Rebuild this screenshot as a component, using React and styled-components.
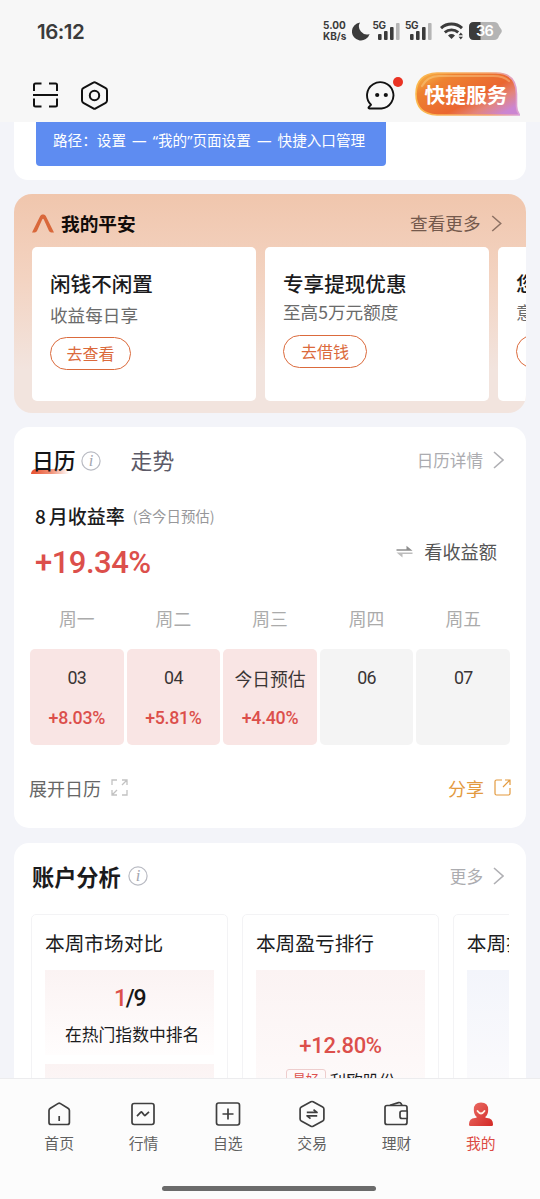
import React from 'react'
import styled, { createGlobalStyle, css } from 'styled-components'

const colors = {
  page: '#f3f4f9',
  header: '#f7f7f7',
  red: '#dc4f4b',
  orange: '#db6a3c',
  gold: '#e39a3f',
  ink: '#1b1b1d',
  gray: '#666',
  lightGray: '#acacb0',
}

const cjk = `'Noto Sans CJK SC', sans-serif`
const digits = `Roboto, 'Noto Sans CJK SC', sans-serif`

const GlobalStyle = createGlobalStyle`
  * {
    box-sizing: border-box;
  }

  body {
    margin: 0;
    background-color: ${colors.page};
    font-family: ${cjk};
    color: ${colors.ink};
  }
`

const Screen = styled.div`
  width: 540px;
  height: 1199px;
  display: flex;
  flex-direction: column;
  overflow: hidden;
  white-space: nowrap;
`

/* status bar */

const StatusBar = styled.div`
  height: 64px;
  flex: none;
  display: flex;
  align-items: center;
  justify-content: space-between;
  padding: 0 38px 2px 37px;
  background-color: ${colors.header};
`

const Clock = styled.div`
  font-family: Inter, sans-serif;
  font-size: 20.5px;
  font-weight: 600;
  letter-spacing: -0.5px;
  color: #3b3b3b;
`

const StatusIcons = styled.div`
  display: flex;
  align-items: center;
  height: 24px;
`

const Speed = styled.div`
  width: 24px;
  margin-right: 5px;
  font-family: Inter, sans-serif;
  font-size: 10px;
  line-height: 11.5px;
  font-weight: 700;
  color: #3b3b3b;
`

const Signal = styled.div`
  display: flex;
  align-items: flex-start;
  width: 30px;
  height: 20px;
  margin-left: 2.5px;
  font-family: Inter, sans-serif;
  font-size: 10px;
  line-height: 8px;
  font-weight: 700;
  letter-spacing: -0.3px;
  color: #3b3b3b;

  svg {
    margin: 2px 0 0 -8px;
  }
`

const Battery = styled.div`
  display: flex;
  align-items: center;
  width: 33px;
  height: 18px;
  margin-left: 5px;
`

/* header */

const Toolbar = styled.div`
  height: 58px;
  flex: none;
  display: flex;
  align-items: center;
  padding: 4px 20px 0 32px;
  background-color: ${colors.header};
`

const Spacer = styled.div`
  flex: 1;
`

const HexButton = styled.div`
  display: flex;
  margin-left: 22px;
`

const ChatButton = styled.div`
  position: relative;
  display: flex;
  margin-right: 19px;
`

const Dot = styled.span`
  position: absolute;
  top: -4px;
  right: -7px;
  width: 10px;
  height: 10px;
  border-radius: 50%;
  background-color: #ea3323;
`

const ServiceBadge = styled.div`
  position: relative;
  width: 105px;
  height: 44px;
  margin-top: -3px;
  padding-right: 3px;
  display: flex;
  align-items: center;
  justify-content: center;

  svg {
    position: absolute;
    inset: 0;
  }

  span {
    position: relative;
    font-size: 20.8px;
    font-weight: 700;
    line-height: 44px;
    color: #fff;
  }
`

/* content */

const Content = styled.main`
  height: 956px;
  flex: none;
  overflow: hidden;
  padding: 0 14.5px 0 14px;
`

const Card = styled.section`
  background-color: #fff;
  border-radius: 15px;
  margin-bottom: 14px;
`

const TipCard = styled(Card)`
  height: 58px;
  padding: 0 22px;
  border-radius: 0 0 14px 14px;
`

const Tip = styled.div`
  width: 350px;
  height: 43.5px;
  padding-left: 17px;
  border-radius: 0 0 4px 4px;
  background-color: #5e8cf1;
  font-family: 'Noto Sans', 'Noto Sans CJK SC', sans-serif;
  font-size: 14.6px;
  line-height: 36px;
  word-spacing: 2.3px;
  color: #fff;
`

const PinganCard = styled(Card)`
  height: 219px;
  padding: 0 0 0 18px;
  border-radius: 18px;
  overflow: hidden;
  background: linear-gradient(#f0c6ad 0%, #f3d3c1 38%, #f2e4de 80%);
`

const PinganHead = styled.div`
  height: 53px;
  display: flex;
  align-items: center;
  padding: 5px 24px 0 0;
`

const PinganTitle = styled.h2`
  margin: 0 auto 0 7px;
  font-size: 18.7px;
  font-weight: 700;
  line-height: 28px;
  color: #120c0a;
`

const More = styled.span`
  display: flex;
  align-items: center;
  gap: 10px;
  font-size: ${(props) => props.size || 16.6}px;
  line-height: 24px;
  color: ${(props) => props.color || colors.lightGray};
`

const OfferRow = styled.div`
  display: flex;
  gap: 9px;
`

const Offer = styled.div`
  flex: none;
  width: 224px;
  height: 154px;
  padding: 21px 0 0 18px;
  border-radius: 5px;
  background-color: #fff;
`

const OfferTitle = styled.div`
  font-size: 20.6px;
  line-height: 30px;
  font-weight: 500;
`

const OfferText = styled.div`
  margin-top: ${(props) => (props.tight ? 1 : 4)}px;
  font-size: 17.6px;
  line-height: 26px;
  color: #6b6b6b;
`

const OfferButton = styled.div`
  width: ${(props) => props.width}px;
  height: 33px;
  margin-top: ${(props) => (props.tight ? 10 : 8.5)}px;
  border: 1px solid ${colors.orange};
  border-radius: 17px;
  font-size: 16px;
  line-height: 30px;
  text-align: center;
  color: ${colors.orange};
`

/* calendar */

const CalendarCard = styled(Card)`
  height: 401px;
  padding: 0 15.5px 0 16px;
  margin-bottom: 14.5px;
`

const Tabs = styled.div`
  height: 65px;
  display: flex;
  align-items: center;
  padding: 0 6px 0 2px;
`

const Tab = styled.div`
  position: relative;
  font-size: 21.8px;
  line-height: 32px;
  color: #5c5a67;

  ${(props) =>
    props.isActive &&
    css`
      font-weight: 500;
      color: #141416;

      &:before {
        content: '';
        position: absolute;
        left: -1px;
        bottom: 1.5px;
        width: 38px;
        height: 5.5px;
        border-radius: 5px 0 0 0;
        background: linear-gradient(90deg, #e8502e, #f2957c 55%, #fff);
      }
    `}

  span {
    position: relative;
  }
`

const InfoSlot = styled.div`
  display: flex;
  margin: ${(props) => props.margin};
`

const Summary = styled.div`
  display: flex;
  justify-content: space-between;
  height: 101px;
  padding: 8px 13px 0 5px;
`

const Period = styled.div`
  display: flex;
  align-items: center;
  height: 30px;
  font-size: 19px;
  font-weight: 500;

  span {
    margin-right: 3px;
  }

  small {
    margin-left: 8px;
    font-size: 14.4px;
    font-weight: 400;
    color: #97979a;
  }
`

const Rate = styled.div`
  margin-top: 15px;
  font-family: ${digits};
  font-size: 31px;
  font-weight: 500;
  line-height: 36px;
  letter-spacing: -0.5px;
  color: ${colors.red};
`

const Switcher = styled.div`
  display: flex;
  align-items: center;
  gap: 11px;
  height: 26px;
  margin-top: 38px;
  font-size: 18.2px;
  color: #555;
`

const Week = styled.div`
  display: grid;
  grid-template-columns: repeat(5, 1fr);
  column-gap: 3px;
`

const Weekday = styled.div`
  height: 56px;
  padding-top: 12px;
  font-size: 17.8px;
  line-height: 26px;
  text-align: center;
  color: #ababab;
`

const Day = styled.div`
  height: 95.5px;
  padding-top: 16px;
  border-radius: 5px;
  text-align: center;
  background-color: ${(props) => (props.isUp ? '#f9e5e4' : '#f4f4f4')};
`

const DayLabel = styled.div`
  font-family: ${(props) => (props.isToday ? cjk : digits)};
  font-size: 17.8px;
  font-weight: 400;
  line-height: 26px;
  letter-spacing: ${(props) => (props.isToday ? 0 : -0.7)}px;
  color: #3a3535;
`

const DayRate = styled.div`
  margin-top: 15px;
  font-family: ${digits};
  font-size: 17.8px;
  font-weight: 500;
  line-height: 24px;
  letter-spacing: -0.3px;
  color: ${colors.red};
`

const CalendarFoot = styled.div`
  display: flex;
  align-items: center;
  justify-content: space-between;
  height: 86px;
  margin: 0 -1px;
  font-size: 18px;
  color: ${colors.gray};
`

const FootAction = styled.div`
  display: flex;
  align-items: center;
  gap: 10px;
  color: ${(props) => props.color};
`

/* analysis */

const AnalysisCard = styled(Card)`
  height: 300px;
  padding: 0 16.5px 0 17px;
`

const AnalysisHead = styled.div`
  height: 71px;
  display: flex;
  align-items: center;
  padding: 0 5px 5px 1px;
`

const AnalysisTitle = styled.h2`
  margin: 0;
  font-size: 22.2px;
  line-height: 32px;
  font-weight: 700;
`

const PanelRow = styled.div`
  display: flex;
  gap: 13.6px;
  overflow: hidden;
`

const Panel = styled.div`
  flex: none;
  width: 197.3px;
  height: 220px;
  padding: 0 13px;
  border: 1px solid #f3f3f5;
  border-radius: 5px;
`

const PanelTitle = styled.div`
  height: 55px;
  padding-top: 13px;
  font-size: 19.7px;
  line-height: 30px;
`

const Tile = styled.div`
  height: ${(props) => props.height || 85}px;
  margin-bottom: 9px;
  padding-top: ${(props) => props.top || 0}px;
  text-align: center;
  background: linear-gradient(${(props) => props.tint || '#fbf3f3'}, #fffdfd);
`

const Rank = styled.div`
  font-family: ${digits};
  font-size: 23px;
  font-weight: 500;
  line-height: 28px;
  letter-spacing: -1.2px;
  color: #161616;

  em {
    font-style: normal;
    color: ${colors.red};
  }
`

const RankText = styled.div`
  margin: 9px 0 0 5px;
  font-size: 16.8px;
  line-height: 24px;
`

const Gain = styled.div`
  font-family: ${digits};
  font-size: 22px;
  font-weight: 500;
  line-height: 26px;
  letter-spacing: -0.3px;
  color: ${colors.red};
`

const Stock = styled.div`
  display: flex;
  align-items: center;
  justify-content: center;
  gap: 4px;
  margin-top: 8px;
  font-size: 16.4px;
  line-height: 26px;
`

const StockTag = styled.span`
  width: 40px;
  height: 22px;
  border: 1px solid #eecdcd;
  border-radius: 3px;
  font-size: 13px;
  line-height: 18px;
  color: ${colors.red};
`

/* bottom navigation */

const BottomNav = styled.nav`
  flex: 1;
  display: flex;
  flex-direction: column;
  align-items: center;
  border-top: 1px solid #ececee;
  background-color: #fcfcfc;
`

const NavItems = styled.div`
  width: 506px;
  height: 107px;
  display: flex;
`

const NavItem = styled.div`
  flex: 1;
  display: flex;
  flex-direction: column;
  align-items: center;
  padding-top: 20px;
  font-size: 14.8px;
  line-height: 22px;
  color: ${(props) => (props.isActive ? '#dc4a42' : '#606060')};

  svg {
    margin-bottom: 2.5px;
  }
`

const HomeIndicator = styled.div`
  width: 214px;
  height: 5px;
  border-radius: 3px;
  margin-right: 2px;
  background-color: #6b6b6b;
`

/* icons */

const Moon = () => (
  <svg width="18" height="19" viewBox="0 0 18 19">
    <path d="M8 .6A9 9 0 1 0 17.6 12 8 8 0 0 1 8 .6z" fill="#3b3b3b" />
  </svg>
)

const Bars = () => (
  <svg width="22" height="17" viewBox="0 0 22 17" fill="#3b3b3b">
    <rect x="0" y="11" width="3.6" height="6" rx="1" />
    <rect x="6" y="8" width="3.6" height="9" rx="1" />
    <rect x="12" y="4" width="3.6" height="13" rx="1" />
    <rect x="18" y="0" width="3.6" height="17" rx="1" fill="#b5b5b5" />
  </svg>
)

const Wifi = () => (
  <svg width="24" height="18" viewBox="0 0 24 18" fill="none" stroke="#3b3b3b">
    <path d="M1 6.2A15.5 15.5 0 0 1 22 6.2" strokeWidth="3" />
    <path d="M4.8 10.4A10 10 0 0 1 18.2 10.4" strokeWidth="2.8" />
    <path d="M8 13.6a5.4 5.4 0 0 1 7 0L11.5 17z" fill="#3b3b3b" stroke="none" />
    <path d="M18.6 13.2l2.2-2.6 2.2 2.6zM18.6 14.8l2.2 2.6 2.2-2.6z" fill="#3b3b3b" stroke="none" />
  </svg>
)

const BatteryIcon = () => (
  <svg width="33" height="18" viewBox="0 0 33 18">
    <path d="M5 0h20q4 0 5 4l2.4 3.5q.8 1.5 0 3L30 14q-1 4-5 4H5q-5 0-5-5V5q0-5 5-5z" fill="#b4b4b4" />
    <path d="M5 0h6.5v18H5q-5 0-5-5V5q0-5 5-5z" fill="#3b3b3b" />
    <text x="15.5" y="14.2" textAnchor="middle" fontFamily="Inter, sans-serif" fontSize="14.5" fontWeight="600" letterSpacing="-.8" fill="#fff">
      36
    </text>
  </svg>
)

const Scan = () => (
  <svg width="27" height="26" viewBox="0 0 27 26" fill="none" stroke="#111" strokeWidth="2">
    <path d="M2 9V3q0-1.500 1.500-1.500H9.500M17 1.500H23.500q1.500 0 1.500 1.500V9M2 16.500V23q0 1.500 1.500 1.500H9.500M17 24.500H23.500q1.500 0 1.500-1.500V16.500M1 13H26" />
  </svg>
)

const HexSetting = () => (
  <svg width="27" height="29" viewBox="0 0 27 29" fill="none" stroke="#111" strokeWidth="2">
    <path d="M12.3 1.700q1.200-.7 2.400 0L24.700 7.200q1.300.7 1.300 2.200V19.600q0 1.500-1.300 2.200L14.700 27.300q-1.200.7-2.400 0L2.300 21.800Q1 21.100 1 19.600V9.400Q1 7.900 2.300 7.200z" />
    <circle cx="13.5" cy="14.5" r="4.7" />
  </svg>
)

const Chat = () => (
  <svg width="30" height="29" viewBox="0 0 30 29">
    <path
      d="M15.500 27.500H3.500Q1.800 27.200 3 25.800L5 23.800A13.200 13.200 0 1 1 15.500 27.500z"
      fill="none"
      stroke="#111"
      strokeWidth="1.9"
      strokeLinejoin="round"
    />
    <circle cx="11.2" cy="14" r="2.1" fill="#111" />
    <circle cx="19.8" cy="14" r="2.1" fill="#111" />
  </svg>
)

const ServiceShape = () => (
  <svg width="105" height="44" viewBox="0 0 105 44">
    <defs>
      <linearGradient id="service" x1="0" y1="0" x2="1" y2=".75">
        <stop offset="0" stopColor="#f9bc4a" />
        <stop offset=".25" stopColor="#ee8230" />
        <stop offset=".65" stopColor="#ea6630" />
        <stop offset=".82" stopColor="#e3847c" />
        <stop offset="1" stopColor="#cb85d2" />
      </linearGradient>
      <linearGradient id="serviceEdge" x1="0" y1="0" x2="1" y2="0">
        <stop offset="0" stopColor="#fbb94c" />
        <stop offset=".7" stopColor="#f6a56c" />
        <stop offset="1" stopColor="#dba0d8" />
      </linearGradient>
    </defs>
    <path
      d="M22 1H81Q101.500 1 101.500 22V34q0 5 3 9H22Q1 42 1 22T22 1z"
      fill="url(#service)"
      stroke="url(#serviceEdge)"
      strokeWidth="1.6"
    />
    <path d="M7 14Q12 4.500 24 4H78Q89 4 94 9" fill="none" stroke="#fddc9a" strokeOpacity=".4" strokeWidth="2.2" strokeLinecap="round" />
  </svg>
)

const PinganLogo = () => (
  <svg width="22" height="19" viewBox="0 0 22 19">
    <path d="M0 18.500 8.200 2Q9 .5 10.200 .5h1.600q1.200 0 2 1.500L22 18.500H19.300q-1.600 0-2.300-1.400L11.800 5.500q-.8-1.500-1.600 0L5 17.100q-.7 1.400-2.300 1.400z" fill="#d9683b" />
  </svg>
)

const Chevron = ({ color, height = 18 }) => (
  <svg width="11" height={height} viewBox="0 0 11 18" fill="none" stroke={color || '#b0b0b4'} strokeWidth="1.6">
    <path d="M1 1l9 8-9 8" />
  </svg>
)

const Info = () => (
  <svg width="20" height="20" viewBox="0 0 20 20">
    <circle cx="10" cy="10" r="9.1" fill="none" stroke="#b9bbc3" strokeWidth="1.2" />
    <text x="10" y="15" textAnchor="middle" fontFamily="Liberation Serif, serif" fontStyle="italic" fontSize="16.5" fill="#a4a6af">
      i
    </text>
  </svg>
)

const Swap = () => (
  <svg width="17" height="13" viewBox="0 0 17 13">
    <path d="M.5 5.800V4.300H10.500V.8l6 5z" fill="#8e8e8e" />
    <path d="M16.500 7.400v1.500H6.500v3.500L.5 7.400z" fill="#bdbdbd" />
  </svg>
)

const Expand = () => (
  <svg width="17" height="17" viewBox="0 0 17 17" fill="none" stroke="#c2c2c2" strokeWidth="1.3">
    <path d="M1 6V1h5M11 1h5v5M16 1l-5 5M16 11v5h-5M1 11v5h5M1 16l5-5" />
  </svg>
)

const Share = () => (
  <svg width="17" height="17" viewBox="0 0 17 17" fill="none" stroke={colors.gold} strokeWidth="1.2">
    <path d="M8 1H2.500Q1 1 1 2.500V14.500Q1 16 2.500 16H14.500Q16 16 16 14.500V9M11 1h5v5M16 1L9 8" />
  </svg>
)

const navIconProps = {
  width: 30,
  height: 30,
  viewBox: '0 0 30 30',
  fill: 'none',
  stroke: '#3f3f3f',
  strokeWidth: 1.7,
  strokeLinejoin: 'round',
}

const HomeIcon = () => (
  <svg {...navIconProps}>
    <path d="M14.300 4.400q.9-.5 1.800 0L24 9.300q1.400.9 1.400 2.300V23.500q0 2-2 2H7q-2 0-2-2V11.600q0-1.400 1.400-2.300zM15.200 17V22" />
  </svg>
)

const MarketIcon = () => (
  <svg {...navIconProps}>
    <rect x="4" y="4.5" width="22" height="21" rx="2.2" />
    <path d="M9 17.200 12.800 13.200q.7-.5 1.200.2L16.300 16.200q.6.600 1.200 0L21 12.800" />
  </svg>
)

const WatchIcon = () => (
  <svg {...navIconProps}>
    <rect x="3.5" y="4" width="23" height="22" rx="2.2" />
    <path d="M15 9.500V20.500M9.500 15H20.500" />
  </svg>
)

const TradeIcon = () => (
  <svg {...navIconProps}>
    <path d="M13.900 2.800q1.100-.6 2.200 0L25.700 8q1.200.7 1.200 2V20q0 1.300-1.200 2L16.100 27.200q-1.100.6-2.200 0L4.300 22Q3.100 21.300 3.100 20V10Q3.100 8.700 4.300 8z" />
    <path d="M9.800 13.400H20L16.500 10.600M20.200 16.800H10L13.500 19.600" />
  </svg>
)

const WalletIcon = () => (
  <svg {...navIconProps}>
    <path d="M26 12V8.500q0-2-2-2H6q-2 0-2 2V23.500q0 2 2 2H24q2 0 2-2V19.500" />
    <path d="M9 6.300 17.500 3.600Q19 3.200 20 4.500L21 6.300" />
    <path d="M26.200 12H21q-2 0-2 2V17.500q0 2 2 2H26.200z" />
  </svg>
)

const MineIcon = () => (
  <svg width="30" height="30" viewBox="0 0 30 30">
    <defs>
      <linearGradient id="mine" x1="0" y1="0" x2="1" y2=".8">
        <stop offset="0" stopColor="#eb7068" />
        <stop offset="1" stopColor="#d52f2b" />
      </linearGradient>
    </defs>
    <path
      d="M15 3.500q7.200 0 7.200 7.200 0 4.800-3 7.300 0 1 1.800 1 6 .5 6 6.300v.5q0 1.200-1.400 1.200H4.400Q3 27 3 25.800v-.5q0-5.800 6-6.300 1.800 0 1.800-1-3-2.500-3-7.300 0-7.200 7.200-7.200z"
      fill="url(#mine)"
    />
    <path d="M11.500 12q3.500 5 7 0" fill="none" stroke="#fff3e6" strokeWidth="1.8" strokeLinecap="round" />
  </svg>
)

const offers = [
  { title: '闲钱不闲置', text: '收益每日享', action: '去查看', width: 81 },
  { title: '专享提现优惠', text: '至高5万元额度', action: '去借钱', width: 84, tight: true },
  { title: '您的意见', text: '意见反馈', action: '去反馈', width: 84, tight: true },
]

const weekdays = ['周一', '周二', '周三', '周四', '周五']

const days = [
  { label: '03', rate: '+8.03%' },
  { label: '04', rate: '+5.81%' },
  { label: '今日预估', rate: '+4.40%', isToday: true },
  { label: '06' },
  { label: '07' },
]

const navItems = [
  { label: '首页', Icon: HomeIcon },
  { label: '行情', Icon: MarketIcon },
  { label: '自选', Icon: WatchIcon },
  { label: '交易', Icon: TradeIcon },
  { label: '理财', Icon: WalletIcon },
  { label: '我的', Icon: MineIcon, isActive: true },
]

const Header = () => (
  <>
    <StatusBar>
      <Clock>16:12</Clock>
      <StatusIcons>
        <Speed>
          5.00
          <br />
          KB/s
        </Speed>
        <Moon />
        <Signal>
          5G
          <Bars />
        </Signal>
        <Signal>
          5G
          <Bars />
        </Signal>
        <InfoSlot margin="0 0 0 5px">
          <Wifi />
        </InfoSlot>
        <Battery>
          <BatteryIcon />
        </Battery>
      </StatusIcons>
    </StatusBar>
    <Toolbar>
      <Scan />
      <HexButton>
        <HexSetting />
      </HexButton>
      <Spacer />
      <ChatButton>
        <Chat />
        <Dot />
      </ChatButton>
      <ServiceBadge>
        <ServiceShape />
        <span>快捷服务</span>
      </ServiceBadge>
    </Toolbar>
  </>
)

const Pingan = () => (
  <PinganCard>
    <PinganHead>
      <PinganLogo />
      <PinganTitle>我的平安</PinganTitle>
      <More size={17.6} color="#74594c">
        查看更多
        <Chevron color="#8d7163" height={17} />
      </More>
    </PinganHead>
    <OfferRow>
      {offers.map((offer) => (
        <Offer key={offer.title}>
          <OfferTitle>{offer.title}</OfferTitle>
          <OfferText tight={offer.tight}>{offer.text}</OfferText>
          <OfferButton width={offer.width} tight={offer.tight}>
            {offer.action}
          </OfferButton>
        </Offer>
      ))}
    </OfferRow>
  </PinganCard>
)

const Calendar = () => (
  <CalendarCard>
    <Tabs>
      <Tab isActive>
        <span>日历</span>
      </Tab>
      <InfoSlot margin="2px 30px 0 5px">
        <Info />
      </InfoSlot>
      <Tab>走势</Tab>
      <Spacer />
      <More>
        日历详情
        <Chevron />
      </More>
    </Tabs>
    <Summary>
      <div>
        <Period>
          <span>8</span>月收益率<small>(含今日预估)</small>
        </Period>
        <Rate>+19.34%</Rate>
      </div>
      <Switcher>
        <Swap />
        看收益额
      </Switcher>
    </Summary>
    <Week>
      {weekdays.map((name) => (
        <Weekday key={name}>{name}</Weekday>
      ))}
      {days.map((day) => (
        <Day key={day.label} isUp={!!day.rate}>
          <DayLabel isToday={day.isToday}>{day.label}</DayLabel>
          {day.rate && <DayRate>{day.rate}</DayRate>}
        </Day>
      ))}
    </Week>
    <CalendarFoot>
      <FootAction>
        展开日历
        <Expand />
      </FootAction>
      <FootAction color={colors.gold}>
        分享
        <Share />
      </FootAction>
    </CalendarFoot>
  </CalendarCard>
)

const Analysis = () => (
  <AnalysisCard>
    <AnalysisHead>
      <AnalysisTitle>账户分析</AnalysisTitle>
      <InfoSlot margin="0 0 0 7px">
        <Info />
      </InfoSlot>
      <Spacer />
      <More>
        更多
        <Chevron />
      </More>
    </AnalysisHead>
    <PanelRow>
      <Panel>
        <PanelTitle>本周市场对比</PanelTitle>
        <Tile top={15}>
          <Rank>
            <em>1</em>/9
          </Rank>
          <RankText>在热门指数中排名</RankText>
        </Tile>
        <Tile />
      </Panel>
      <Panel>
        <PanelTitle>本周盈亏排行</PanelTitle>
        <Tile height={180} top={63}>
          <Gain>+12.80%</Gain>
          <Stock>
            <StockTag>最好</StockTag>
            利欧股份
          </Stock>
        </Tile>
      </Panel>
      <Panel>
        <PanelTitle>本周操作评价</PanelTitle>
        <Tile height={180} tint="#f3f5fb" />
      </Panel>
    </PanelRow>
  </AnalysisCard>
)

export default function App() {
  return (
    <Screen>
      <GlobalStyle />
      <Header />
      <Content>
        <TipCard>
          <Tip>路径：设置 — “我的”页面设置 — 快捷入口管理</Tip>
        </TipCard>
        <Pingan />
        <Calendar />
        <Analysis />
      </Content>
      <BottomNav>
        <NavItems>
          {navItems.map(({ label, Icon, isActive }) => (
            <NavItem key={label} isActive={isActive}>
              <Icon />
              {label}
            </NavItem>
          ))}
        </NavItems>
        <HomeIndicator />
      </BottomNav>
    </Screen>
  )
}
